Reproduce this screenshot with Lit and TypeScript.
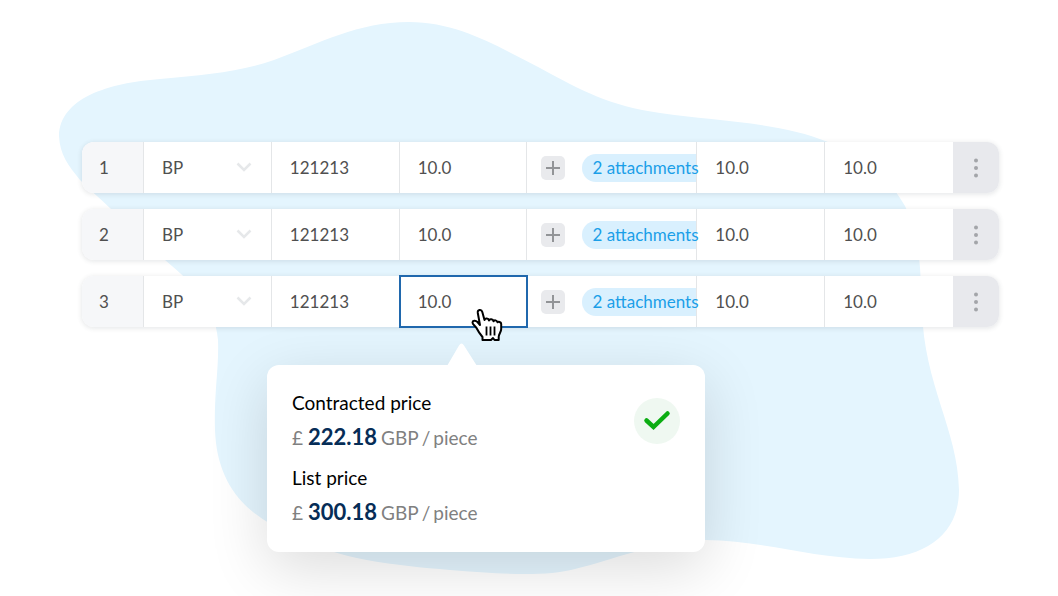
import { LitElement, html, css, svg } from "lit";
import { customElement, property, state } from "lit/decorators.js";
import { classMap } from "lit/directives/class-map.js";

interface OrderLine {
  id: number;
  unit: string;
  code: string;
  price: string;
  attachments: number;
  quantity: string;
  total: string;
}

const lines: OrderLine[] = [1, 2, 3].map((id) => ({
  id,
  unit: "BP",
  code: "121213",
  price: "10.0",
  attachments: 2,
  quantity: "10.0",
  total: "10.0",
}));

const chevronIcon = svg`<path d="M1.500 1.500 8 8l6.500-6.500" fill="none" stroke="#e6e8ea" stroke-width="2.500" />`;

@customElement("price-popover")
export class PricePopover extends LitElement {
  @property() contracted = "";
  @property() list = "";

  static styles = css`
    :host {
      display: block;
      position: relative;
      box-sizing: border-box;
      border-radius: 12px;
      background: #fff;
      box-shadow: 0 16px 60px rgba(0, 0, 0, 0.14);
      font-family: Lato, sans-serif;
    }
    .arrow {
      position: absolute;
      left: 178px;
      top: -22px;
      display: block;
    }
    .body {
      display: flex;
      justify-content: space-between;
      align-items: flex-start;
      padding: 24px 25px 20px;
    }
    .prices {
      margin: 0;
    }
    dt {
      font-size: 19px;
      line-height: 28px;
      color: #000;
    }
    dd {
      display: flex;
      align-items: baseline;
      gap: 3px;
      height: 40px;
      margin: 0 0 7px;
      font-size: 19px;
      line-height: 40px;
      color: #808080;
    }
    dd:last-child {
      margin: 0;
    }
    strong {
      margin: 0 1px 0 2px;
      font-size: 22px;
      font-weight: 700;
      color: #062d57;
    }
    .status {
      display: grid;
      place-items: center;
      width: 46px;
      height: 46px;
      margin-top: 9px;
      border-radius: 50%;
      background: #eff8f1;
    }
  `;

  private price(label: string, amount: string) {
    return html`<dt>${label}</dt>
      <dd><span>£</span> <strong>${amount}</strong> <span>GBP</span> <span>/</span> <span>piece</span></dd>`;
  }

  render() {
    return html`
      <svg class="arrow" width="34" height="23" viewBox="0 0 34 23" aria-hidden="true">
        <path d="M2 23 14 2.500Q16.500-1.500 19 2.500L32 23Z" fill="#fff" />
      </svg>
      <div class="body">
        <dl class="prices">
          ${this.price("Contracted price", this.contracted)} ${this.price("List price", this.list)}
        </dl>
        <span class="status" role="img" aria-label="Price confirmed">
          <svg width="28" height="22" viewBox="0 0 28 22">
            <path d="M3.500 10.500 10.500 17 24.500 3.500" fill="none" stroke="#0cad13" stroke-width="4.500" stroke-linecap="round" />
          </svg>
        </span>
      </div>
    `;
  }
}

@customElement("app-root")
export class AppRoot extends LitElement {
  @state() private activeLine = 3;

  static styles = css`
    :host {
      display: block;
      position: relative;
      min-height: 100vh;
      box-sizing: border-box;
      overflow: hidden;
      background: #fff;
      font-family: Lato, sans-serif;
      font-size: 17px;
      line-height: 24px;
      color: #505050;
    }
    .blob {
      position: absolute;
      inset: 0;
      width: 100%;
      height: 100%;
    }
    main {
      position: relative;
      padding: 142px 59px 40px 82px;
    }
    table,
    tbody {
      display: block;
    }
    tbody {
      display: grid;
      gap: 16px;
    }
    tr {
      display: grid;
      grid-template-columns: 62px repeat(2, minmax(0, 128fr)) minmax(0, 127fr) minmax(0, 171fr) repeat(2, minmax(0, 128fr)) 46px;
      height: 51px;
      border-radius: 12px;
      background: #fff;
      box-shadow: 0 1px 4px 1px rgba(50, 60, 70, 0.1);
    }
    th,
    td {
      position: relative;
      display: flex;
      align-items: center;
      box-sizing: border-box;
      min-width: 0;
      padding: 0;
      border-right: 1px solid #e4e6e8;
      font-weight: 400;
    }
    th {
      padding-left: 17px;
      border-radius: 12px 0 0 12px;
      background: #f6f7f9;
    }
    input,
    select {
      box-sizing: border-box;
      width: 100%;
      height: 100%;
      margin: 0;
      padding: 0 18px;
      border: 0;
      outline: 0;
      appearance: none;
      background: transparent;
      font: inherit;
      color: inherit;
    }
    .chevron {
      position: absolute;
      right: 19px;
      pointer-events: none;
    }
    .active {
      outline: 2px solid #2068ad;
      outline-offset: -1px;
      border-color: transparent;
      z-index: 1;
    }
    .pointer {
      position: absolute;
      left: 71px;
      top: 32px;
      pointer-events: none;
    }
    .files {
      gap: 17px;
      padding-left: 14px;
    }
    button {
      display: grid;
      place-items: center;
      flex: none;
      margin: 0;
      padding: 0;
      border: 0;
      cursor: pointer;
    }
    .add {
      width: 24px;
      height: 24px;
      border-radius: 5px;
      background: #e9eaed;
    }
    .chip {
      flex: 1;
      box-sizing: border-box;
      min-width: 0;
      padding: 2px 0 2px 11px;
      border-radius: 14px 0 0 14px;
      background: #d9f0fe;
      color: #1b9fe8;
      text-decoration: none;
      white-space: nowrap;
    }
    .last {
      border-right: 0;
    }
    .menu-cell {
      border: 0;
    }
    .menu {
      width: 100%;
      height: 100%;
      border-radius: 0 12px 12px 0;
      background: #e8e9ed;
    }
    price-popover {
      width: 438px;
      max-width: 100%;
      margin: 38px 0 0 185px;
    }
  `;

  private field(line: OrderLine, name: string, value: string) {
    return html`<input type="text" aria-label="${name}, line ${line.id}" .value=${value} />`;
  }

  private row(line: OrderLine) {
    const active = line.id === this.activeLine;
    return html`
      <tr>
        <th scope="row">${line.id}</th>
        <td>
          <select aria-label="Unit, line ${line.id}">
            <option>${line.unit}</option>
          </select>
          <svg class="chevron" width="16" height="11" viewBox="0 0 16 11" aria-hidden="true">${chevronIcon}</svg>
        </td>
        <td>${this.field(line, "Code", line.code)}</td>
        <td class=${classMap({ active })} @focusin=${() => (this.activeLine = line.id)}>
          ${this.field(line, "Price", line.price)} ${active ? this.pointer() : null}
        </td>
        <td class="files">
          <button class="add" type="button" aria-label="Add attachment">
            <svg width="14" height="14" viewBox="0 0 14 14">
              <path d="M7 0v14M0 7h14" stroke="#929497" stroke-width="2" />
            </svg>
          </button>
          <a class="chip" href="#">${line.attachments} attachments</a>
        </td>
        <td>${this.field(line, "Quantity", line.quantity)}</td>
        <td class="last">${this.field(line, "Total", line.total)}</td>
        <td class="menu-cell">
          <button class="menu" type="button" aria-label="Line menu">
            <svg width="6" height="20" viewBox="0 0 6 20" fill="#a3a5a9">
              <circle cx="3" cy="2.500" r="2" />
              <circle cx="3" cy="10" r="2" />
              <circle cx="3" cy="17.500" r="2" />
            </svg>
          </button>
        </td>
      </tr>
    `;
  }

  private pointer() {
    return html`
      <svg class="pointer" width="32" height="34" viewBox="0 0 32 34" aria-hidden="true">
        <path
          d="M11.500 32v-3C9 26 7 23 5.500 20 4 17.500 1.500 16.500 1.500 14.500c0-2 3-2.500 5-.5l2.500 3L6.800 5C6.300 1.500 10.500 1 11.300 4l2.200 8c.5-2 4-2 4.500.5.5-1.800 4-1.500 4.500.8.800-1.800 3.500-1 4 1 .8-1 3.700-.5 3.700 1.700v5c0 3-2.500 5-2.500 8v3h-4.200l-1.500-2-2 2Z"
          fill="#fff" stroke="#000" stroke-width="2" stroke-linejoin="round"
        />
        <path d="M15.500 18.500v9M19.500 18.500v9M23.500 18.500v9" stroke="#000" stroke-width="1.800" />
      </svg>
    `;
  }

  render() {
    return html`
      <svg class="blob" viewBox="0 0 1058 596" preserveAspectRatio="none" aria-hidden="true">
        <path
          fill="#e4f5fe"
          d="M59 136C60 98 108 83 160 79C205 75 240 72 274 60C320 43 358 22 409 22C460 22 500 48 540 68C582 91 610 106 660 113C715 121 780 122 828 142C870 160 890 180 905 206C922 240 920 275 922 310C924 385 958 430 959 490C959 535 925 559 870 559C810 558 765 541 705 540C655 541 610 561 575 569C545 577 500 574 450 570C395 565 340 561 290 534C240 512 217 480 215 430C214 390 219 370 218 340C215 305 195 285 165 260C130 225 95 195 80 180C68 165 60 155 59 136Z"
        />
      </svg>
      <main>
        <table aria-label="Order lines">
          <tbody>
            ${lines.map((line) => this.row(line))}
          </tbody>
        </table>
        <price-popover contracted="222.18" list="300.18"></price-popover>
      </main>
    `;
  }
}
